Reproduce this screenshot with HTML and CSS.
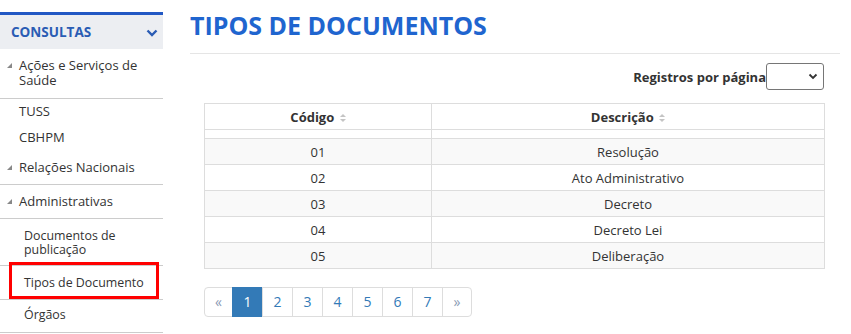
FILE: index.html
```html
<!DOCTYPE html>
<html lang="pt-BR">
<head>
  <meta charset="UTF-8">
  <meta name="viewport" content="width=device-width, initial-scale=1.0">
  <title>Tipos de Documentos</title>
  <link rel="stylesheet" href="styles.css">
</head>
<body>
  <div class="page">
    <aside class="sidebar">
      <div class="side-head">
        <span>CONSULTAS</span>
        <svg class="chev" width="12" height="8" viewBox="0 0 12 8"><path d="M1.5 1.5 L6 6 L10.5 1.5" fill="none" stroke="#2a5cb4" stroke-width="2.4"/></svg>
      </div>
      <ul class="menu">
        <li class="group first sep"><span class="tri"></span><span>Ações e Serviços de<br>Saúde</span></li>
        <li class="leaf">TUSS</li>
        <li class="leaf">CBHPM</li>
        <li class="group sep"><span class="tri"></span><span>Relações Nacionais</span></li>
        <li class="group sep"><span class="tri"></span><span>Administrativas</span></li>
        <li class="sub two-line sep">Documentos de<br>publicação</li>
        <li class="sub sep active">Tipos de Documento</li>
        <li class="sub last sep">Órgãos</li>
      </ul>
    </aside>

    <main class="content">
      <h1 class="title">TIPOS DE DOCUMENTOS</h1>

      <div class="toolbar">
        <label>Registros por página</label>
        <div class="select">
          <svg width="10" height="7" viewBox="0 0 10 7"><path d="M1.5 1.5 L5 5 L8.5 1.5" fill="none" stroke="#333" stroke-width="1.8"/></svg>
        </div>
      </div>

      <table class="grid">
        <thead>
          <tr>
            <th class="col-code">Código <span class="sort"></span></th>
            <th>Descrição <span class="sort"></span></th>
          </tr>
        </thead>
        <tbody>
          <tr class="spacer"><td></td><td></td></tr>
          <tr class="odd"><td>01</td><td>Resolução</td></tr>
          <tr><td>02</td><td>Ato Administrativo</td></tr>
          <tr class="odd"><td>03</td><td>Decreto</td></tr>
          <tr><td>04</td><td>Decreto Lei</td></tr>
          <tr class="odd"><td>05</td><td>Deliberação</td></tr>
        </tbody>
      </table>

      <ul class="pagination">
        <li class="muted">&laquo;</li>
        <li class="current">1</li>
        <li>2</li>
        <li>3</li>
        <li>4</li>
        <li>5</li>
        <li>6</li>
        <li>7</li>
        <li class="muted">&raquo;</li>
      </ul>
    </main>
  </div>
</body>
</html>
```

FILE: styles.css
```css
body {
  margin: 0;
  font-family: "Open Sans", "Noto Sans", sans-serif;
  font-size: 13px;
  color: #333;
  background: #fff;
}
.page {
  display: flex;
}
/* Sidebar */
.sidebar {
  width: 163px;
  flex: none;
  margin-top: 12px;
  border-top: 3px solid #2258c4;
}
.side-head {
  height: 34px;
  background-color: #eceef2;
  display: flex;
  align-items: center;
  justify-content: space-between;
  padding: 0 5px 0 11px;
  font-size: 13.5px;
  font-weight: bold;
  color: #2a5cb4;
}
.chev {
  margin-top: 1px;
}
.menu {
  list-style: none;
  margin: 0;
  padding: 0;
}
.menu li {
  line-height: 15px;
  position: relative;
}
.sep {
  border-bottom: 1px solid #ccc;
}
.group {
  display: flex;
  align-items: flex-start;
  padding: 9px 4px 9px 7px;
}
.group.first {
  padding-bottom: 10px;
}
.tri {
  width: 0;
  height: 0;
  border-left: 5px solid transparent;
  border-bottom: 5px solid #888;
  margin: 5px 7px 0 0;
  flex: none;
}
.leaf {
  padding: 5px 0 6px 19px;
}
.sub {
  font-size: 12.4px;
  padding: 10px 4px 9px 24px;
}
.menu .sub {
  line-height: 14px;
}
.sub.two-line {
  padding-bottom: 8px;
}
.sub.last {
  padding: 8px 4px 10px 24px;
}
.active::after {
  content: "";
  position: absolute;
  left: 9px;
  right: 4px;
  top: -4px;
  bottom: 0;
  border: 3px solid #f00;
}
/* Main */
.content {
  margin-left: 27px;
  width: 650px;
}
.title {
  margin: 9px 0 0;
  padding-bottom: 11px;
  font-size: 25px;
  line-height: 33px;
  font-weight: bold;
  color: #1f65cf;
  border-bottom: 1px solid #e5e5e5;
}
.toolbar {
  display: flex;
  justify-content: flex-end;
  align-items: center;
  margin-top: 9px;
  padding-right: 16px;
}
.toolbar label {
  font-weight: bold;
  font-size: 13px;
}
.select {
  width: 51px;
  height: 25px;
  border: 1px solid #767676;
  border-radius: 3px;
  display: flex;
  align-items: center;
  justify-content: flex-end;
  padding-right: 5px;
}
.grid {
  margin: 13px 0 0 14px;
  width: 621px;
  border-collapse: collapse;
}
.grid th, .grid td {
  border: 1px solid #ddd;
  text-align: center;
  height: 25px;
  padding: 0;
}
.grid th {
  font-weight: bold;
  color: #333;
}
.col-code {
  width: 226px;
}
.sort {
  display: inline-block;
  width: 0;
  height: 9px;
  margin-left: 2px;
  vertical-align: -1px;
  position: relative;
  border-left: 3px solid transparent;
  border-right: 3px solid transparent;
}
.sort::before, .sort::after {
  content: "";
  position: absolute;
  left: -3px;
  border-left: 3px solid transparent;
  border-right: 3px solid transparent;
}
.sort::before {
  top: 0;
  border-bottom: 3px solid #c4c4c4;
}
.sort::after {
  top: 5px;
  border-top: 3px solid #c4c4c4;
}
.grid .spacer td {
  height: 8px;
}
.grid .odd td {
  background-color: #f9f9f9;
}
.pagination {
  list-style: none;
  display: flex;
  margin: 18px 0 0 14px;
  padding: 0;
}
.pagination li {
  width: 29px;
  height: 28px;
  line-height: 28px;
  text-align: center;
  border: 1px solid #ddd;
  margin-left: -1px;
  color: #337ab7;
  font-size: 14px;
}
.pagination li:first-child {
  margin-left: 0;
  width: 27px;
  border-radius: 4px 0 0 4px;
}
.pagination li:last-child {
  width: 28px;
  border-radius: 0 4px 4px 0;
}
.pagination .muted {
  color: #8a9bb5;
}
.pagination .current {
  background-color: #337ab7;
  border-color: #337ab7;
  color: #fff;
}
```
